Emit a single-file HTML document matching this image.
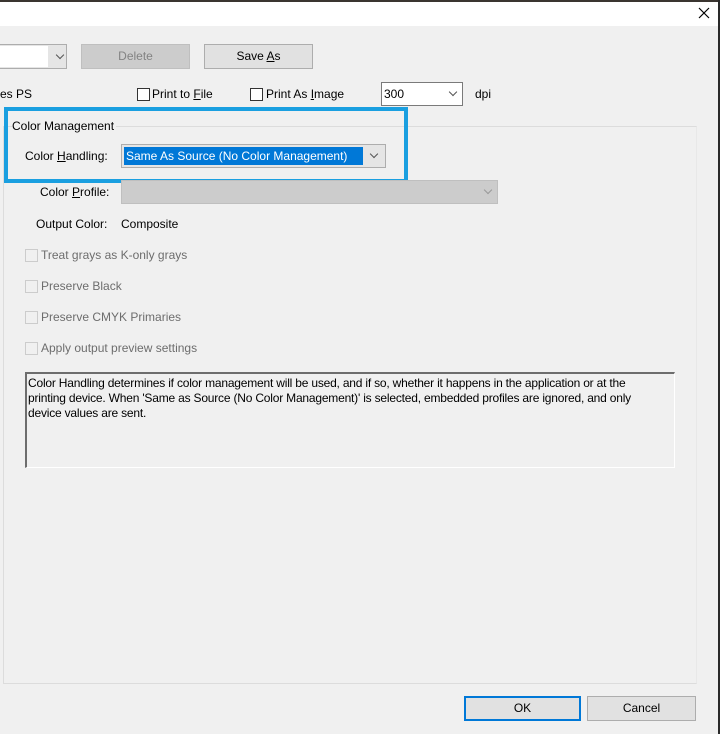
<!DOCTYPE html>
<html><head><style>
*{box-sizing:border-box;margin:0;padding:0}
body{width:720px;height:734px;overflow:hidden;background:#f0f0f0;font-family:"Liberation Sans",sans-serif;font-size:12px;color:#000;position:relative}
.a{position:absolute}
.t{position:absolute;white-space:nowrap;line-height:14px}
.cb{position:absolute;width:13px;height:13px;border:1px solid #333;background:#fff}
.cbd{position:absolute;width:13px;height:13px;border:1px solid #ccc;background:#f0f0f0}
.g{color:#6d6d6d}
.chev{position:absolute;width:6px;height:6px;border-right:1px solid #555;border-bottom:1px solid #555;transform:rotate(45deg)}
u{text-decoration:underline}
</style></head><body>
<div class="a" style="left:0;top:0;width:720px;height:2px;background:#3a3530"></div>
<div class="a" style="left:0;top:2px;width:720px;height:24px;background:#fff"></div>
<div class="a" style="left:718px;top:0;width:2px;height:734px;background:#2a2a2a"></div>
<svg class="a" style="left:698px;top:7px" width="12" height="12"><path d="M1 1L11 11M11 1L1 11" stroke="#000" stroke-width="1.2"/></svg>

<div class="a" style="left:-1px;top:44px;width:68px;height:25px;border:1px solid #adadad;background:#e5e5e5"><div class="a" style="left:0;top:1px;width:48px;height:21px;background:#fff"></div></div>
<div class="chev" style="left:57px;top:52px"></div>
<div class="a" style="left:81px;top:44px;width:109px;height:25px;background:#cccccc;border:1px solid #bfbfbf;color:#838383;text-align:center;line-height:23px">Delete</div>
<div class="a" style="left:204px;top:44px;width:109px;height:25px;background:#e1e1e1;border:1px solid #adadad;text-align:center;line-height:23px">Save <u>A</u>s</div>

<div class="t" style="left:0;top:87px">es PS</div>
<div class="cb" style="left:137px;top:88px"></div>
<div class="t" style="left:152px;top:87px">Print to <u>F</u>ile</div>
<div class="cb" style="left:250px;top:88px"></div>
<div class="t" style="left:266px;top:87px">Print As <u>I</u>mage</div>
<div class="a" style="left:381px;top:82px;width:82px;height:24px;background:#fff;border:1px solid #7a7a7a"></div>
<div class="t" style="left:384px;top:87px">300</div>
<div class="chev" style="left:450px;top:89px"></div>
<div class="t" style="left:475px;top:87px">dpi</div>

<div class="a" style="left:3px;top:126px;width:694px;height:558px;border:1px solid #dcdcdc;border-right-color:#e8e8e8"></div>
<div class="t" style="left:12px;top:119px;background:#f0f0f0;padding-right:2px">Color Management</div>
<div class="a" style="left:4px;top:107px;width:404px;height:76px;border:4px solid #1a9fe0"></div>

<div class="t" style="left:25px;top:149px">Color <u>H</u>andling:</div>
<div class="a" style="left:121px;top:144px;width:265px;height:24px;background:#e5e5e5;border:1px solid #adadad"></div>
<div class="a" style="left:124px;top:147px;width:239px;height:18px;background:#0078d7"></div>
<div class="t" style="left:126px;top:149px;color:#fff">Same As Source (No Color Management)</div>
<div class="chev" style="left:371px;top:151px"></div>

<div class="t" style="left:40px;top:185px">Color <u>P</u>rofile:</div>
<div class="a" style="left:121px;top:180px;width:377px;height:24px;background:#cccccc;border:1px solid #bfbfbf"></div>
<div class="chev" style="left:485px;top:187px;border-color:#999"></div>

<div class="t" style="left:36px;top:217px">Output Color:</div>
<div class="t" style="left:121px;top:217px">Composite</div>

<div class="cbd" style="left:25px;top:249px"></div><div class="t g" style="left:41px;top:248px">Treat grays as K-only grays</div>
<div class="cbd" style="left:25px;top:280px"></div><div class="t g" style="left:41px;top:279px">Preserve Black</div>
<div class="cbd" style="left:25px;top:311px"></div><div class="t g" style="left:41px;top:310px">Preserve CMYK Primaries</div>
<div class="cbd" style="left:25px;top:342px"></div><div class="t g" style="left:41px;top:341px">Apply output preview settings</div>

<div class="a" style="left:25px;top:372px;width:650px;height:96px;border:1px solid #fff;border-top:2px solid #6d6d6d;border-left:2px solid #6d6d6d;padding:2px 1px;font-size:12px;line-height:15px;letter-spacing:-0.2px;white-space:nowrap">Color Handling determines if color management will be used, and if so, whether it happens in the application or at the<br>printing device. When 'Same as Source (No Color Management)' is selected, embedded profiles are ignored, and only<br>device values are sent.</div>

<div class="a" style="left:464px;top:696px;width:117px;height:25px;background:#e1e1e1;border:2px solid #0078d7;text-align:center;line-height:21px">OK</div>
<div class="a" style="left:587px;top:696px;width:109px;height:25px;background:#e1e1e1;border:1px solid #adadad;text-align:center;line-height:23px">Cancel</div>
</body></html>
